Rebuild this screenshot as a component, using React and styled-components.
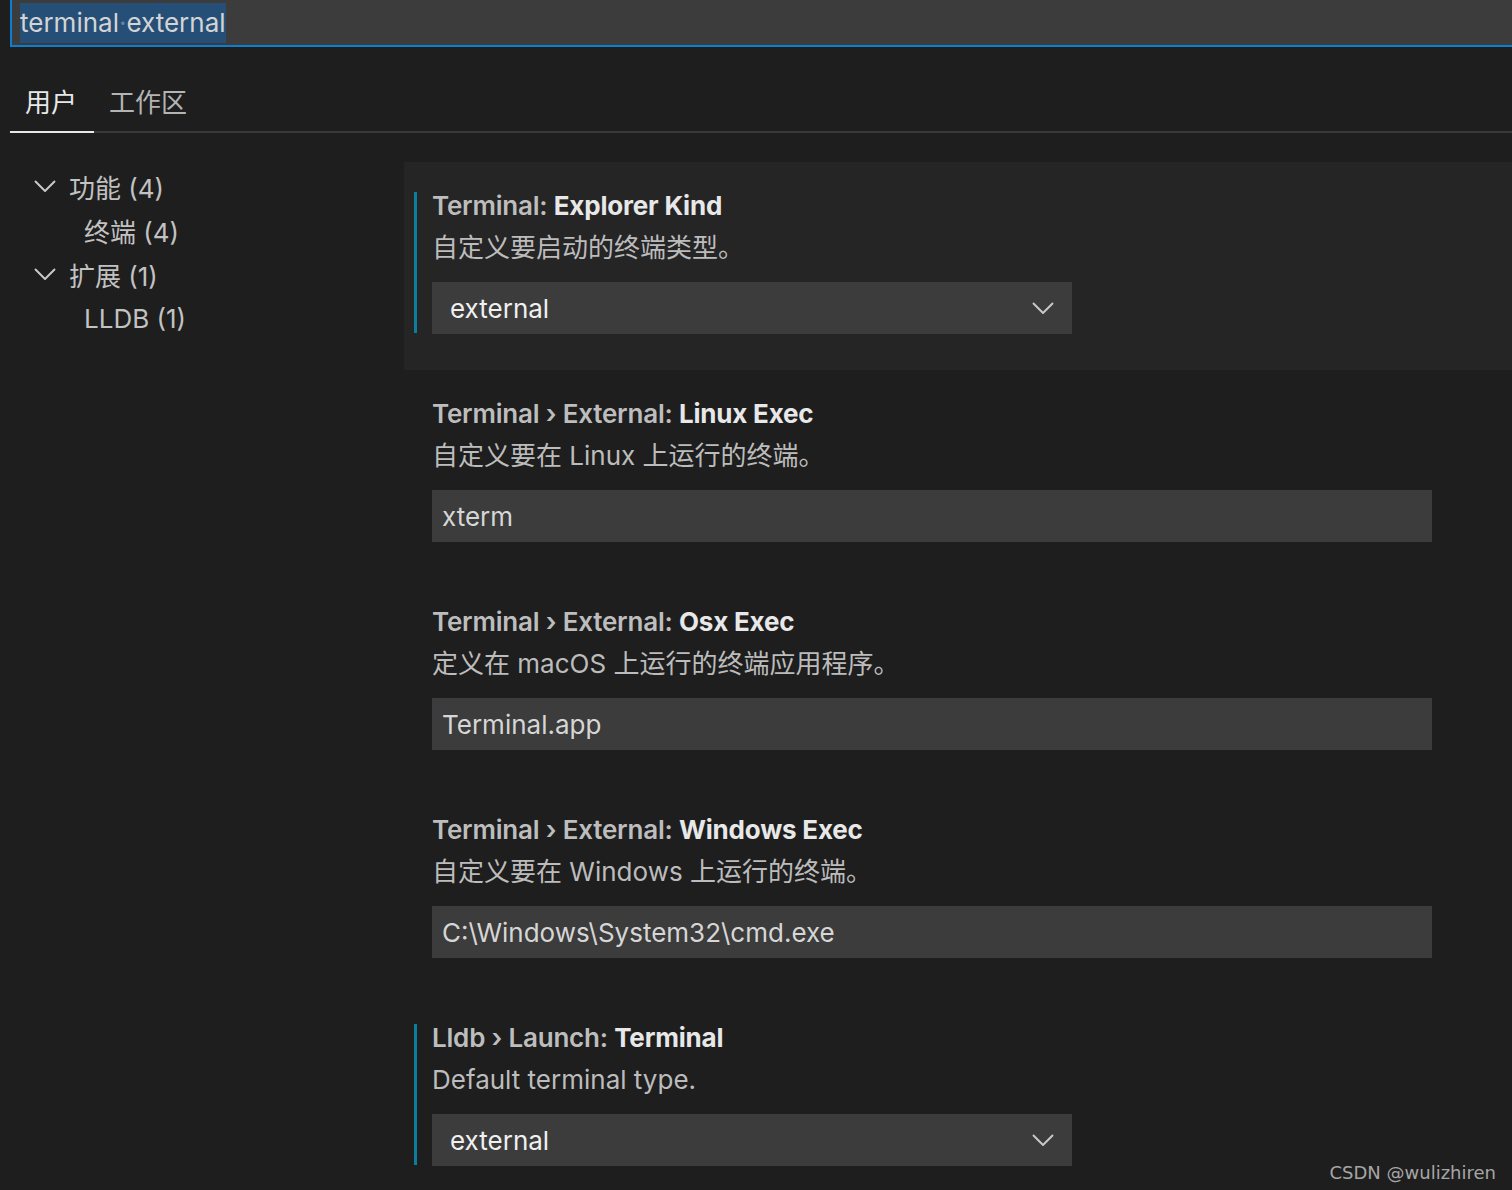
import React from 'react';
import styled, { createGlobalStyle } from 'styled-components';

const GlobalStyle = createGlobalStyle`
    html, body {
        margin: 0;
        padding: 0;
        background: #1e1e1e;
    }
    body {
        height: 1190px;
        overflow: hidden;
        font-family: "Inter", "Noto Sans CJK SC", "Noto Sans", sans-serif;
        -webkit-font-smoothing: antialiased;
    }
`;

const Page = styled.div`
    position: relative;
    width: 1512px;
    height: 1190px;
    background: #1e1e1e;
    color: #cccccc;
    overflow: hidden;
`;

const SearchBox = styled.div`
    margin-left: 10px;
    height: 45px;
    background: #3c3c3c;
    border-left: 2px solid #0a7fd0;
    border-bottom: 2px solid #0a7fd0;
    display: flex;
    align-items: center;
    padding-left: 8px;
    font-size: 26px;
    color: #d4d4d4;
`;

const Selection = styled.span`
    background: #264f78;
    line-height: 40px;
    .ws {
        color: #6d8096;
    }
`;

const TabBar = styled.div`
    margin: 29px 0 0 10px;
    display: flex;
    border-bottom: 2px solid #3a3a3a;
`;

const Tab = styled.div`
    padding: 0 17px 0 15px;
    height: 55px;
    line-height: 53px;
    font-size: 26px;
    color: ${p => (p.active ? '#e8e8e8' : '#b4b4b4')};
    border-bottom: 2px solid ${p => (p.active ? '#e8e8e8' : 'transparent')};
    margin-bottom: -2px;
`;

const Body = styled.div`
    display: flex;
`;

const Tree = styled.div`
    width: 404px;
    flex-shrink: 0;
    padding-top: 31px;
`;

const TreeRow = styled.div`
    height: 44px;
    display: flex;
    align-items: center;
    padding-left: ${p => (p.child ? '84px' : '34px')};
    font-size: 26px;
    color: #c2c2c2;
    svg {
        width: 22px;
        height: 12px;
        margin-right: 13px;
    }
`;

const Settings = styled.div`
    flex: 1;
    padding-top: 29px;
`;

const Item = styled.div`
    height: 208px;
    box-sizing: border-box;
    padding: 30px 0 0 10px;
    background: ${p => (p.focused ? '#252526' : 'transparent')};
`;

const ItemInner = styled.div`
    border-left: 3px solid ${p => (p.modified ? '#0c7d9d' : 'transparent')};
    padding-left: 15px;
    height: 141px;
    box-sizing: border-box;
`;

const Title = styled.div`
    height: 27px;
    line-height: 27px;
    font-size: 26px;
    font-weight: 600;
    color: #bdbdbd;
    letter-spacing: -0.2px;
    b {
        color: #e8e8e8;
        font-weight: 700;
    }
`;

const Description = styled.div`
    margin-top: 15px;
    height: 27px;
    line-height: 27px;
    font-size: 26px;
    color: #bcbcbc;
`;

const Select = styled.div`
    margin-top: 21px;
    width: 640px;
    height: 52px;
    box-sizing: border-box;
    background: #3c3c3c;
    display: flex;
    align-items: center;
    justify-content: space-between;
    padding: 0 18px 0 18px;
    font-size: 26px;
    color: #f0f0f0;
    svg {
        width: 22px;
        height: 12px;
    }
`;

const TextInput = styled.div`
    margin-top: 21px;
    width: 1000px;
    height: 52px;
    box-sizing: border-box;
    background: #3c3c3c;
    display: flex;
    align-items: center;
    padding-left: 10px;
    font-size: 26px;
    color: #d6d6d6;
`;

const Watermark = styled.div`
    position: absolute;
    right: 16px;
    bottom: 7px;
    font-family: "DejaVu Sans", sans-serif;
    font-size: 18px;
    color: #a6a6a6;
`;

const Chevron = () => (
    <svg viewBox="0 0 22 12" fill="none" stroke="#c8c8c8" strokeWidth="2">
        <polyline points="1,1 11,11 21,1" />
    </svg>
);

const settings = [
    {
        category: 'Terminal: ',
        label: 'Explorer Kind',
        desc: '自定义要启动的终端类型。',
        kind: 'select',
        value: 'external',
        modified: true,
        focused: true,
    },
    {
        category: 'Terminal › External: ',
        label: 'Linux Exec',
        desc: '自定义要在 Linux 上运行的终端。',
        kind: 'text',
        value: 'xterm',
    },
    {
        category: 'Terminal › External: ',
        label: 'Osx Exec',
        desc: '定义在 macOS 上运行的终端应用程序。',
        kind: 'text',
        value: 'Terminal.app',
    },
    {
        category: 'Terminal › External: ',
        label: 'Windows Exec',
        desc: '自定义要在 Windows 上运行的终端。',
        kind: 'text',
        value: 'C:\\Windows\\System32\\cmd.exe',
    },
    {
        category: 'Lldb › Launch: ',
        label: 'Terminal',
        desc: 'Default terminal type.',
        kind: 'select',
        value: 'external',
        modified: true,
    },
];

const tree = [
    { label: '功能 (4)', open: true },
    { label: '终端 (4)', child: true },
    { label: '扩展 (1)', open: true },
    { label: 'LLDB (1)', child: true },
];

const App = () => (
    <>
        <GlobalStyle />
        <Page>
            <SearchBox>
                <Selection>terminal<span className="ws">·</span>external</Selection>
            </SearchBox>
            <TabBar>
                <Tab active>用户</Tab>
                <Tab>工作区</Tab>
            </TabBar>
            <Body>
                <Tree>
                    {tree.map((t, i) => (
                        <TreeRow key={i} child={t.child}>
                            {t.open && <Chevron />}
                            {t.label}
                        </TreeRow>
                    ))}
                </Tree>
                <Settings>
                    {settings.map((s, i) => (
                        <Item key={i} focused={s.focused}>
                            <ItemInner modified={s.modified}>
                                <Title>{s.category}<b>{s.label}</b></Title>
                                <Description>{s.desc}</Description>
                                {s.kind === 'select' ? (
                                    <Select>
                                        {s.value}
                                        <Chevron />
                                    </Select>
                                ) : (
                                    <TextInput>{s.value}</TextInput>
                                )}
                            </ItemInner>
                        </Item>
                    ))}
                </Settings>
            </Body>
            <Watermark>CSDN @wulizhiren</Watermark>
        </Page>
    </>
);

export default App;
